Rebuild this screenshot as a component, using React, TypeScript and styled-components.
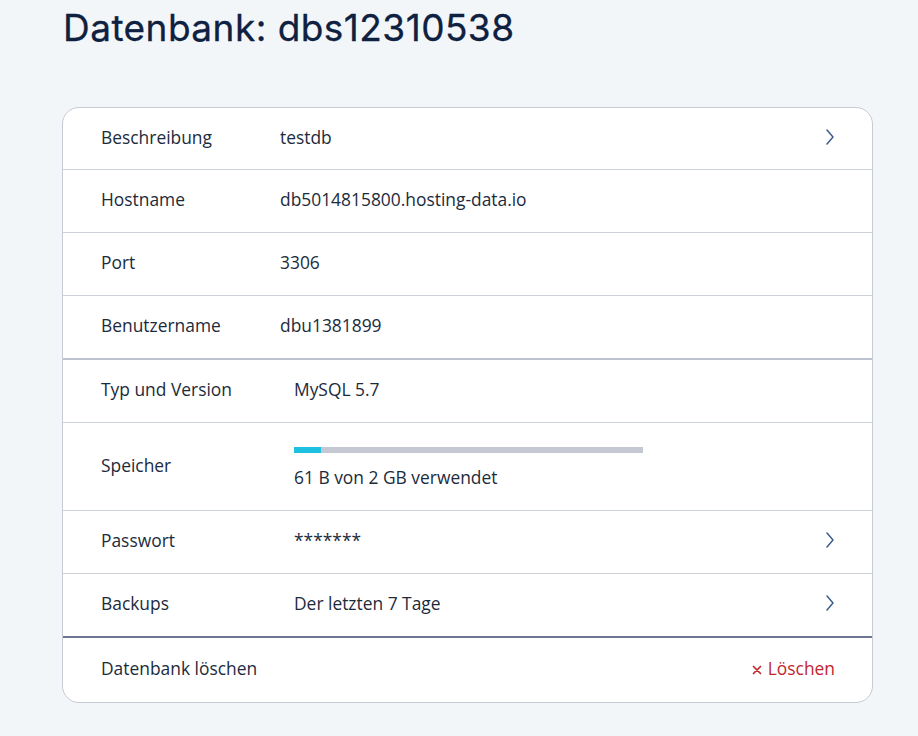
import React from "react";
import styled, { createGlobalStyle } from "styled-components";

const Global = createGlobalStyle`
  html, body { margin: 0; padding: 0; background: #f3f6f9; }
  body { font-family: "Open Sans", "Liberation Sans", sans-serif; color: #1c2b3c; }
`;

const Page = styled.div`
  padding: 5px 45px 40px 62px;
  box-sizing: border-box;
  width: 918px;
`;

const Title = styled.h1`
  margin: 0 0 56px 1px;
  font-family: Inter, "Liberation Sans", sans-serif;
  font-weight: 400;
  font-size: 37px;
  line-height: 46px;
  letter-spacing: 0.45px;
  color: #0f2140;
  -webkit-text-stroke: 0.3px #0f2140;
`;

const Card = styled.div`
  background: #fff;
  border: 1px solid #c6cbd3;
  border-radius: 17px;
  overflow: hidden;
`;

const Row = styled.div<{ $h?: number; $border?: "thin" | "thick" | "dark" | "none" }>`
  display: flex;
  align-items: center;
  box-sizing: border-box;
  height: ${(p) => p.$h ?? 62}px;
  padding: 0 38px 4px 38px;
  border-bottom: ${(p) =>
    p.$border === "none"
      ? "none"
      : p.$border === "thick"
      ? "2px solid #bcc3ce"
      : p.$border === "dark"
      ? "2px solid #6e7590"
      : "1px solid #cdd1d8"};
  font-size: 17.4px;
`;

const Label = styled.div<{ $w: number }>`
  width: ${(p) => p.$w}px;
  flex: none;
  color: #1c2b3c;
`;

const Value = styled.div`
  flex: 1;
  color: #1c2b3c;
`;

const Chevron = styled.svg`
  width: 8px;
  height: 16px;
  flex: none;
`;

const Storage = styled.div`
  flex: 1;
  display: flex;
  flex-direction: column;
  gap: 12px;
  padding-top: 6px;
`;

const Bar = styled.div`
  width: 349px;
  height: 6px;
  background: #c4c8d3;
`;

const Fill = styled.div`
  height: 100%;
  background: #1ec0df;
`;

const DeleteButton = styled.button`
  display: flex;
  align-items: center;
  gap: 6px;
  border: none;
  background: none;
  padding: 0;
  margin-right: -1px;
  font-family: "Open Sans", "Liberation Sans", sans-serif;
  font-size: 17.4px;
  color: #c0262d;
  cursor: pointer;
`;

const ChevronIcon = () => (
  <Chevron viewBox="0 0 8 16">
    <path d="M1 1 L7 8 L1 15" fill="none" stroke="#3d5d8c" strokeWidth="1.5" strokeLinecap="round" strokeLinejoin="round" />
  </Chevron>
);

const XIcon = () => (
  <svg width="10" height="10" viewBox="0 0 10 10" style={{ marginTop: 3 }}>
    <path d="M1.5 1.5 L8.5 8.5 M8.5 1.5 L1.5 8.5" stroke="#c0262d" strokeWidth="1.7" strokeLinecap="round" />
  </svg>
);

export default function App() {
  const used = 27 / 349;
  return (
    <>
      <Global />
      <Page>
        <Title>Datenbank: dbs12310538</Title>
        <Card>
          <Row $h={62}>
            <Label $w={179}>Beschreibung</Label>
            <Value>testdb</Value>
            <ChevronIcon />
          </Row>
          <Row $h={63}>
            <Label $w={179}>Hostname</Label>
            <Value>db5014815800.hosting-data.io</Value>
          </Row>
          <Row $h={63}>
            <Label $w={179}>Port</Label>
            <Value>3306</Value>
          </Row>
          <Row $h={64} $border="thick">
            <Label $w={179}>Benutzername</Label>
            <Value>dbu1381899</Value>
          </Row>
          <Row $h={63}>
            <Label $w={193}>Typ und Version</Label>
            <Value>MySQL 5.7</Value>
          </Row>
          <Row $h={88}>
            <Label $w={193}>Speicher</Label>
            <Storage>
              <Bar>
                <Fill style={{ width: `${used * 100}%` }} />
              </Bar>
              <Value>61 B von 2 GB verwendet</Value>
            </Storage>
          </Row>
          <Row $h={63}>
            <Label $w={193}>Passwort</Label>
            <Value>*******</Value>
            <ChevronIcon />
          </Row>
          <Row $h={64} $border="dark">
            <Label $w={193}>Backups</Label>
            <Value>Der letzten 7 Tage</Value>
            <ChevronIcon />
          </Row>
          <Row $h={64} $border="none">
            <Label $w={193}>Datenbank löschen</Label>
            <Value />
            <DeleteButton>
              <XIcon />
              Löschen
            </DeleteButton>
          </Row>
        </Card>
      </Page>
    </>
  );
}
